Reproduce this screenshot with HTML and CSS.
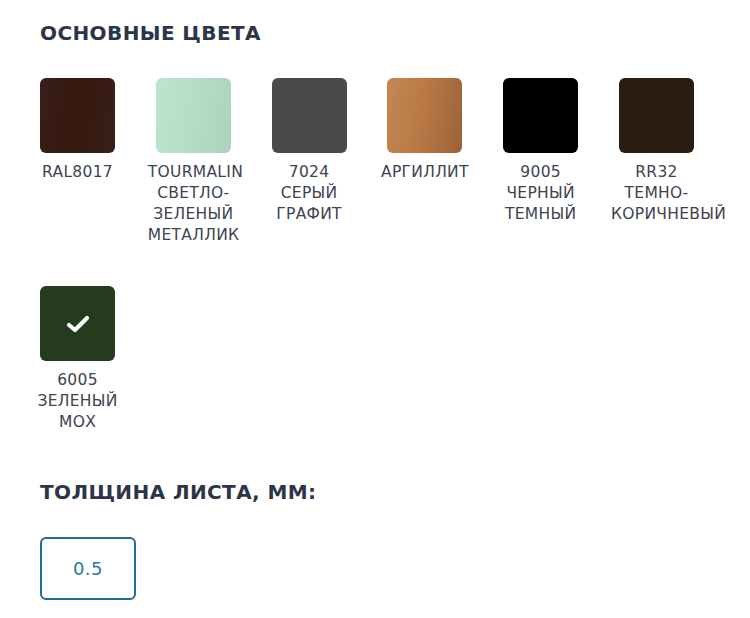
FILE: index.html
```html
<!DOCTYPE html>
<html lang="ru">
<head>
<meta charset="utf-8">
<link rel="stylesheet" href="styles.css">
</head>
<body>
<div class="page">
  <h2 class="title">ОСНОВНЫЕ ЦВЕТА</h2>
  <div class="colors">
    <div class="item"><div class="sw sw-8017"></div><div class="label">RAL8017</div></div>
    <div class="item"><div class="sw sw-tour"></div><div class="label">TOURMALIN СВЕТЛО-ЗЕЛЕНЫЙ МЕТАЛЛИК</div></div>
    <div class="item"><div class="sw sw-7024"></div><div class="label">7024 СЕРЫЙ ГРАФИТ</div></div>
    <div class="item"><div class="sw sw-arg"></div><div class="label">АРГИЛЛИТ</div></div>
    <div class="item"><div class="sw sw-9005"></div><div class="label">9005 ЧЕРНЫЙ ТЕМНЫЙ</div></div>
    <div class="item"><div class="sw sw-rr32"></div><div class="label">RR32 ТЕМНО-КОРИЧНЕВЫЙ</div></div>
    <div class="item"><div class="sw sw-6005"><svg class="check" width="26" height="20" viewBox="0 0 26 20"><path d="M4 11 L10 16 L22 4" fill="none" stroke="#fff" stroke-width="4.2" stroke-linecap="round" stroke-linejoin="round"/></svg></div><div class="label">6005 ЗЕЛЕНЫЙ МОХ</div></div>
  </div>
  <h2 class="title title2">ТОЛЩИНА ЛИСТА, ММ:</h2>
  <div class="sizes">
    <div class="size">0.5</div>
  </div>
</div>
</body>
</html>
```
FILE: styles.css
```css
html, body { margin: 0; padding: 0; background: #fff; }
body { font-family: "DejaVu Sans", Verdana, sans-serif; }
.page { padding: 20px 0 0 40px; width: 710px; }
.title {
  margin: 0;
  font-size: 20px;
  font-weight: bold;
  line-height: 26px;
  color: #2c3547;
  letter-spacing: 0.4px;
}
.colors {
  display: flex;
  flex-wrap: wrap;
  column-gap: 24.8px;
  row-gap: 40px;
  margin: 32px 0 0 -8px;
}
.item {
  width: 91px;
  display: flex;
  flex-direction: column;
  align-items: center;
}
.sw {
  width: 75px;
  height: 75px;
  border-radius: 6px;
  display: flex;
  align-items: center;
  justify-content: center;
}
.sw-8017 { background: linear-gradient(100deg, #3a1f19 0%, #35190f 50%, #3b2018 100%); }
.sw-tour { background: linear-gradient(100deg, #bde5ce 0%, #b3ddc5 50%, #abd3bb 100%); }
.sw-7024 { background: #4a4a4a; }
.sw-arg { background: linear-gradient(100deg, #c48854 0%, #b77846 50%, #9c6138 100%); }
.sw-9005 { background: #000; }
.sw-rr32 { background: #2a1c11; }
.sw-6005 { background: #253b1e; }
.check { display: block; }
.label {
  margin-top: 9px;
  text-align: center;
  font-size: 15.5px;
  letter-spacing: 0.3px;
  line-height: 21px;
  color: #3e4350;
  width: 91px;
}
.title2 { margin-top: 46px; }
.sizes { display: flex; margin-top: 32px; }
.size {
  width: 92px;
  height: 59px;
  border: 2px solid #1d6f9a;
  border-radius: 6px;
  display: flex;
  align-items: center;
  justify-content: center;
  font-size: 18px;
  letter-spacing: 0.5px;
  color: #2a7aa3;
}
```
